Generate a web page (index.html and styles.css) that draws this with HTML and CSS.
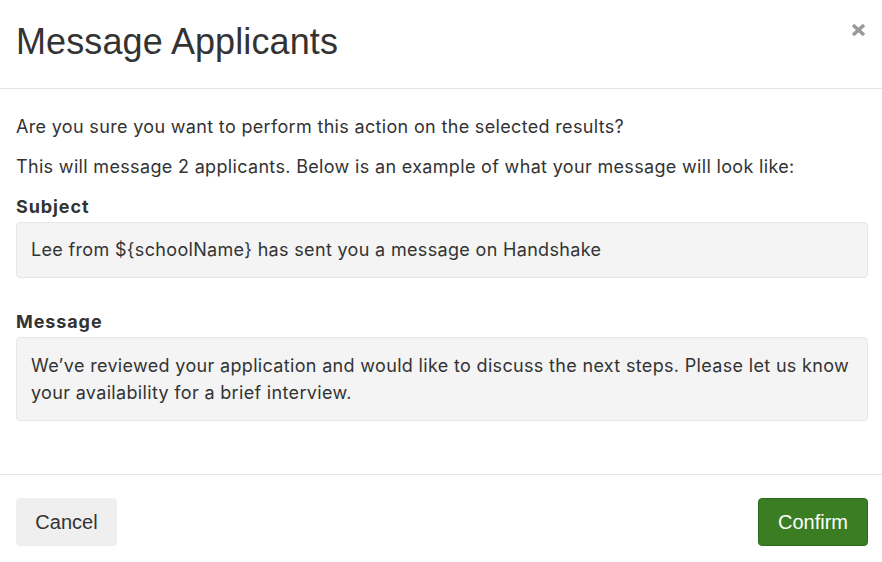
FILE: index.html
```html
<!DOCTYPE html>
<html lang="en">
<head>
<meta charset="utf-8">
<title>Message Applicants</title>
<link rel="stylesheet" href="styles.css">
</head>
<body>
<div class="modal">
  <header class="modal-header">
    <h1 class="modal-title">Message Applicants</h1>
    <button class="close" aria-label="Close">
      <svg width="15" height="14" viewBox="0 0 15 14"><path d="M2 2 L13 12 M13 2 L2 12" stroke="#9a9a9a" stroke-width="3.6" stroke-linecap="butt"/></svg>
    </button>
  </header>
  <section class="modal-body">
    <p class="line">Are you sure you want to perform this action on the selected results?</p>
    <p class="line">This will message 2 applicants. Below is an example of what your message will look like:</p>
    <div class="group">
      <div class="label">Subject</div>
      <div class="box box-subject">Lee from ${schoolName} has sent you a message on Handshake</div>
    </div>
    <div class="group">
      <div class="label">Message</div>
      <div class="box box-message">We’ve reviewed your application and would like to discuss the next steps. Please let us know your availability for a brief interview.</div>
    </div>
  </section>
  <footer class="modal-footer">
    <button class="btn btn-cancel">Cancel</button>
    <button class="btn btn-confirm">Confirm</button>
  </footer>
</div>
</body>
</html>
```

FILE: styles.css
```css
* { box-sizing: border-box; }
html, body {
  margin: 0;
  padding: 0;
  background: #fff;
}
body {
  font-family: "Inter", "Liberation Sans", Arial, sans-serif;
  color: #333;
  font-size: 18px;
  line-height: 27px;
  letter-spacing: 0.33px;
}
.modal {
  width: 882px;
  height: 562px;
  display: flex;
  flex-direction: column;
}
.modal-header {
  position: relative;
  height: 89px;
  padding: 21px 16px 0;
  border-bottom: 1px solid #e4e4e4;
}
.modal-title {
  margin: 0;
  font-family: "Liberation Sans", Arial, sans-serif;
  letter-spacing: 0.1px;
  font-weight: 400;
  font-size: 36px;
  line-height: 42px;
  color: #333;
}
.close {
  position: absolute;
  top: 23px;
  right: 16px;
  border: 0;
  background: none;
  padding: 0;
  width: 15px;
  height: 14px;
  display: block;
}
.close svg { display: block; }
.modal-body {
  padding: 24px 14px 0 16px;
  height: 386px;
  border-bottom: 1px solid #e4e4e4;
}
.line {
  margin: 0 0 13px;
}
.group {
  margin-bottom: 30px;
}
.label {
  font-weight: 700;
  letter-spacing: 0.9px;
  margin-bottom: 2px;
}
.box {
  background: #f4f4f4;
  border: 1px solid #e6e6e6;
  border-radius: 4px;
  padding: 14px 14px;
}
.box-subject { padding: 13px 14px 14px; }
.modal-footer {
  display: flex;
  justify-content: space-between;
  padding: 23px 14px 0 16px;
}
.btn {
  font-family: "Liberation Sans", Arial, sans-serif;
  font-size: 20px;
  height: 48px;
  border-radius: 4px;
  border: 1px solid transparent;
  padding: 0;
  cursor: pointer;
}
.btn-cancel {
  background: #efefef;
  color: #333;
  width: 101px;
}
.btn-confirm {
  background: #3a7d23;
  border-color: #2f6a1c;
  color: #fff;
  width: 110px;
}
```
